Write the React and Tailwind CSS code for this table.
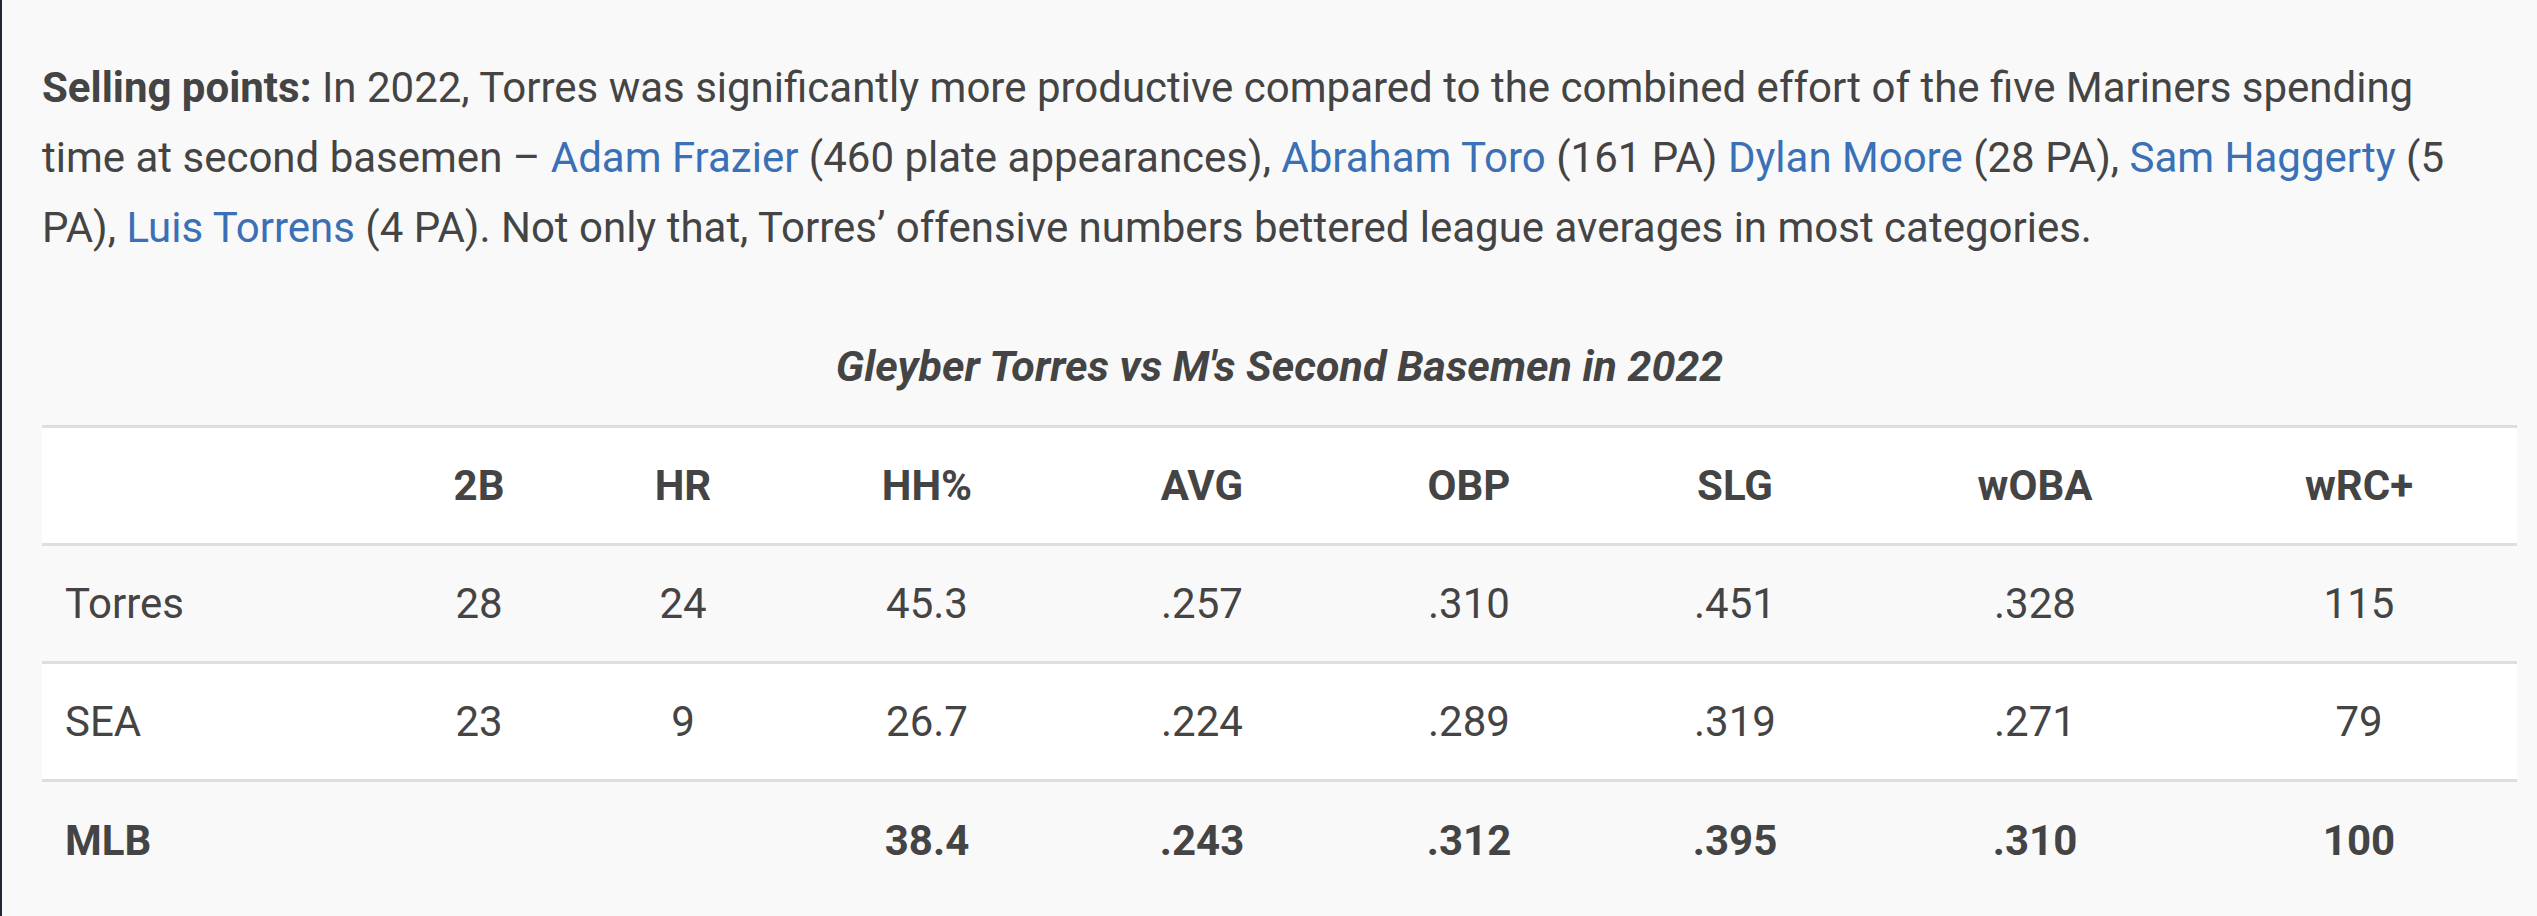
import React from 'react';

const cols = 'grid grid-cols-[337px_200px_208px_280px_270px_264px_268px_332px_316px] items-center';

const header = ['', '2B', 'HR', 'HH%', 'AVG', 'OBP', 'SLG', 'wOBA', 'wRC+'];

const rows = [
    { cells: ['Torres', '28', '24', '45.3', '.257', '.310', '.451', '.328', '115'], bg: '', bold: false },
    { cells: ['SEA', '23', '9', '26.7', '.224', '.289', '.319', '.271', '79'], bg: 'bg-white', bold: false },
    { cells: ['MLB', '', '', '38.4', '.243', '.312', '.395', '.310', '100'], bg: '', bold: true },
];

const Link = ({ children }) => <a href="#" className="text-[#3a70b6]">{children}</a>;

const Row = ({ cells, bg, bold, last }) => (
    <div className={`${cols} h-[118px] ${bg} ${bold ? 'font-bold' : ''} ${last ? '' : 'border-b-[3px] border-[#dedede]'}`}>
        {cells.map((c, i) => (
            <div key={i} className={i === 0 ? 'pl-[23px]' : 'text-center'}>{c}</div>
        ))}
    </div>
);

const App = () => {
    return (
        <div className="min-h-screen bg-[#f9f9f9] border-l-2 border-[#1e2638] pl-10 pr-5 pt-[53px] text-[#444] font-['Roboto',sans-serif] text-[42px] leading-[70px]">
            <p className="pr-[45px]">
                <strong>Selling points:</strong> In 2022, Torres was significantly more productive compared to the combined effort of the five Mariners spending time at second basemen – <Link>Adam Frazier</Link> (460 plate appearances), <Link>Abraham Toro</Link> (161 PA) <Link>Dylan Moore</Link> (28 PA), <Link>Sam Haggerty</Link> (5 PA), <Link>Luis Torrens</Link> (4 PA). Not only that, Torres’ offensive numbers bettered league averages in most categories.
            </p>

            <div className="mt-[68px] mb-6 text-center font-bold italic text-[43px]">Gleyber Torres vs M's Second Basemen in 2022</div>

            <div className="border-t-[3px] border-[#dedede]">
                <div className={`${cols} h-[118px] bg-white font-bold border-b-[3px] border-[#dedede]`}>
                    {header.map((h, i) => (
                        <div key={i} className={i === 0 ? 'pl-[23px]' : 'text-center'}>{h}</div>
                    ))}
                </div>
                {rows.map((r, i) => (
                    <Row key={i} {...r} last={i === rows.length - 1} />
                ))}
            </div>
        </div>
    );
};

export default App;
